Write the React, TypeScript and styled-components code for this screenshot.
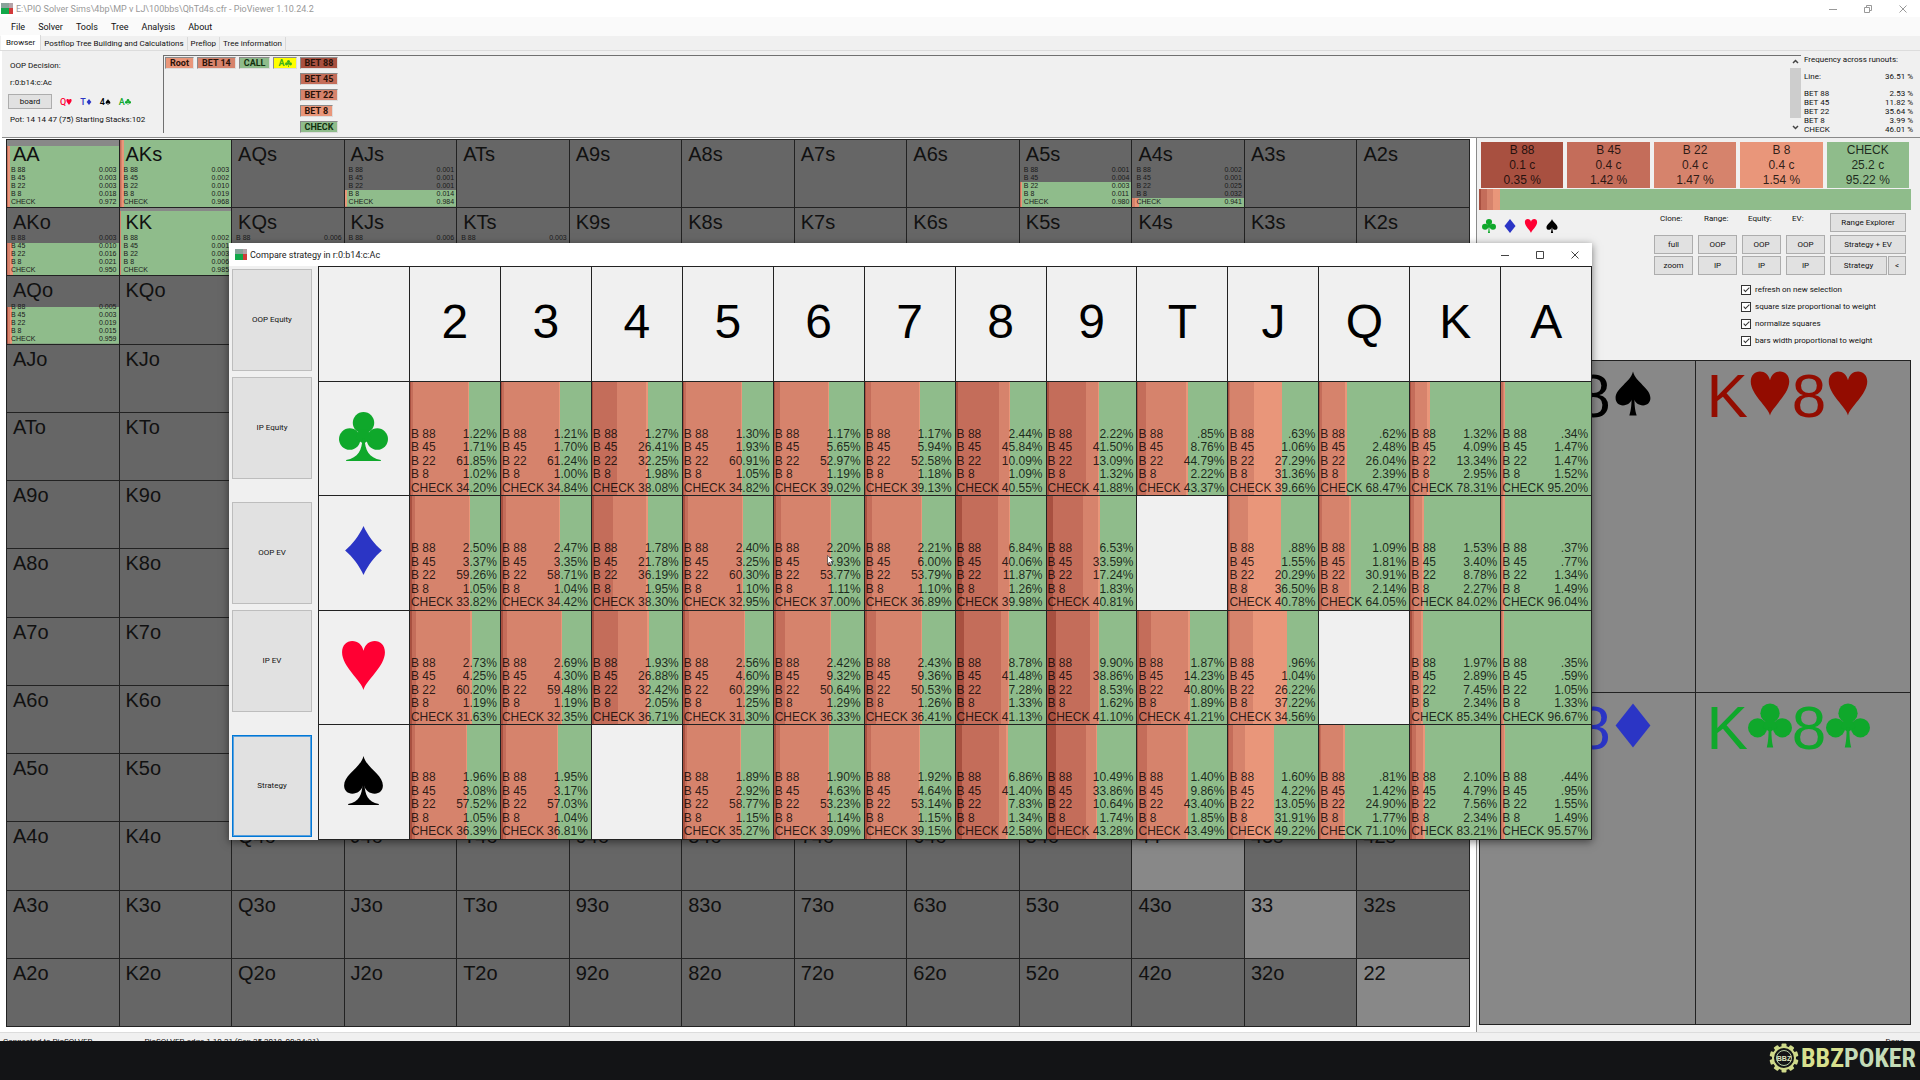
import React from "react";
import styled, { createGlobalStyle } from "styled-components";

const C = {
  b88: "#a85040",
  b45: "#c46d5a",
  b22: "#d6836c",
  b8: "#e9967a",
  check: "#8fbc8b",
  face: "#f0f0f0",
  cell: "#666666",
  pair: "#888888",
  line: "#222222",
};
const ACTIONS = ["B 88", "B 45", "B 22", "B 8", "CHECK"];
const ACTION_COLORS = [C.b88, C.b45, C.b22, C.b8, C.check];

const Global = createGlobalStyle`
  *, *::before, *::after { box-sizing: border-box; }
  body { margin: 0; background: #131416; color: #111; font: 8px/12px Roboto, "Liberation Sans", sans-serif; }
  button, input { font: inherit; color: inherit; margin: 0; }
  table { border-spacing: 0; }
  th { font-weight: 400; }
`;

/* ---------- window chrome ---------- */

const Shell = styled.div`
  position: relative;
  min-height: 100vh;
  display: flex;
  flex-direction: column;
  background: ${C.face};
`;
const TitleBar = styled.header<{ $h: number; $muted?: boolean }>`
  height: ${(p) => p.$h}px;
  flex: none;
  display: flex;
  align-items: center;
  padding-left: ${(p) => (p.$muted ? 1 : 6)}px;
  background: #fff;
  color: ${(p) => (p.$muted ? "#999" : "#222")};
  font: 9px/14px Roboto, "Open Sans", sans-serif;
`;
const TitleText = styled.span`
  flex: 1;
  padding-left: 3px;
`;
const ChromeButton = styled.button`
  width: 35px;
  height: 16px;
  padding: 0;
  border: 0;
  background: none;
  display: grid;
  place-items: center;
  color: ${(p) => p.color};
`;
const MenuBar = styled.nav`
  height: 19px;
  flex: none;
  display: flex;
  align-items: center;
  gap: 13px;
  padding-left: 11px;
  background: #fafafa;
  font: 9px/12px Roboto, "Open Sans", sans-serif;
`;
const MenuItem = styled.button`
  padding: 0;
  border: 0;
  background: none;
`;
const TabStrip = styled.div`
  height: 15px;
  flex: none;
  display: flex;
  align-items: flex-end;
  padding-left: 1px;
  border-bottom: 1px solid #dcdcdc;
`;
const Tab = styled.button<{ $active?: boolean }>`
  height: ${(p) => (p.$active ? 15 : 13)}px;
  padding: 1px ${(p) => (p.$active ? 5 : 3)}px 0;
  border: 0;
  border-right: 1px solid #d9d9d9;
  background: ${(p) => (p.$active ? "#fff" : C.face)};
  line-height: 12px;
`;

/* ---------- top section ---------- */

const Top = styled.section`
  height: 86px;
  flex: none;
  display: grid;
  grid-template-columns: 161px 1fr 119px;
  padding-top: 4px;
  border-left: 2px solid #fff;
`;
const Info = styled.div`
  padding: 5px 0 0 8px;
  display: flex;
  flex-direction: column;
  gap: 5px;
  white-space: nowrap;
`;
const Board = styled.div`
  display: flex;
  align-items: center;
  gap: 8px;
  margin-left: -2px;
`;
const PushButton = styled.button`
  height: 19px;
  padding: 0;
  border: 1px solid #adadad;
  background: #e1e1e1;
  line-height: 12px;
`;
const BoardButton = styled(PushButton)`
  width: 44px;
  height: 15px;
`;
const BoardCard = styled.span`
  display: flex;
  align-items: center;
  color: ${(p) => p.color};
  font-size: 9px;
  font-weight: 500;
`;
const TreePanel = styled.div`
  display: flex;
  align-items: flex-start;
  gap: 3px;
  height: 78px;
  padding: 1px 0 0 1px;
  border-top: 1px solid #707070;
  border-left: 1px solid #707070;
`;
const NodeColumn = styled.div`
  flex: 1;
  display: flex;
  flex-direction: column;
  align-items: flex-start;
  gap: 4px;
`;
const Node = styled.button<{ $bg: string }>`
  display: flex;
  align-items: center;
  height: 12px;
  padding: 0 4px;
  border: 1px solid;
  border-color: #8a8a8a #ddd #ddd #8a8a8a;
  background: ${(p) => p.$bg};
  color: ${(p) => p.color || "#2a1208"};
  font: 700 9px/10px Roboto, "Liberation Sans", sans-serif;
`;
const ScrollTrack = styled.div`
  width: 12px;
  height: 76px;
  display: flex;
  flex-direction: column;
  align-items: center;
  justify-content: space-between;
`;
const ScrollThumb = styled.div`
  width: 11px;
  height: 50px;
  background: #cdcdcd;
`;
const Freq = styled.dl`
  margin: 0;
  padding: 0 7px 0 3px;
  display: grid;
  grid-template-columns: 1fr auto;
  grid-template-rows: 9px 25px repeat(5, 9px);
  align-items: center;
  align-content: start;
  line-height: 9px;
`;
const FreqTitle = styled.dt`
  grid-column: 1 / 3;
`;
const FreqName = styled.dt``;
const FreqValue = styled.dd`
  margin: 0;
  text-align: right;
`;

/* ---------- main ---------- */

const Main = styled.main`
  flex: 1;
  display: grid;
  grid-template-columns: 1fr 444px;
  border-left: 2px solid #fff;
`;
const MatrixWrap = styled.div`
  display: flex;
  padding: 1px 6px 5px 4px;
  background: #fff;
  border-top: 1px solid #8a8a8a;
`;
const Matrix = styled.table`
  flex: 1;
  display: grid;
  border: 1px solid ${C.line};
  border-width: 1px 0 0 1px;
`;
const Contents = styled.tbody`
  display: grid;
  grid-template-columns: repeat(13, 1fr);
  grid-template-rows: repeat(13, minmax(60px, 1fr));
`;
const Row = styled.tr`
  display: contents;
`;
const Hand = styled.td<{ $pair: boolean }>`
  display: flex;
  flex-direction: column;
  justify-content: space-between;
  min-height: 0;
  padding: 4px 2px 3px 4px;
  border: 1px solid ${C.line};
  border-width: 0 1px 1px 0;
  background-color: ${(p) => (p.$pair ? C.pair : C.cell)};
  background-repeat: no-repeat;
  background-position: left bottom;
  font: 20px/20px "Liberation Sans", Arial, sans-serif;
`;
const HandName = styled.span`
  padding-left: 2px;
`;
const HandStats = styled.span`
  display: grid;
  grid-template-columns: 1fr auto;
  grid-template-rows: repeat(5, 1fr);
  height: 38px;
  font-size: 7px;
  line-height: 8px;
  color: #1a1a1a;
`;

const Side = styled.aside`
  display: flex;
  flex-direction: column;
  padding: 0 9px 7px 2px;
  border-left: 1px solid #8a8a8a;
  border-top: 1px solid #8a8a8a;
`;
const Summary = styled.ul`
  list-style: none;
  margin: 0;
  padding: 4px 2px 1px;
  display: grid;
  grid-template-columns: repeat(5, 1fr);
  gap: 4px;
`;
const SummaryBox = styled.li<{ $bg: string }>`
  display: flex;
  flex-direction: column;
  align-items: center;
  height: 46px;
  padding-top: 1px;
  background: ${(p) => p.$bg};
  font: 12px/15px "Liberation Sans", sans-serif;
  color: rgba(0, 0, 0, 0.8);
`;
const StrategyBar = styled.div`
  height: 21px;
`;
const Controls = styled.div`
  display: flex;
  justify-content: space-between;
  padding: 3px 5px 0 3px;
`;
const SuitPicker = styled.div`
  display: flex;
  gap: 7px;
  height: 14px;
  margin-top: 6px;
`;
const ControlGrid = styled.div`
  display: grid;
  grid-template-columns: repeat(4, 39px) 76px;
  grid-template-rows: 20px 19px 19px;
  column-gap: 5px;
  row-gap: 2px;
`;
const GroupLabel = styled.span`
  padding-left: 6px;
  line-height: 11px;
`;
const SplitRow = styled.div`
  display: grid;
  grid-template-columns: 1fr 18px;
  gap: 1px;
`;
const Options = styled.div`
  display: grid;
  gap: 5px;
  padding: 9px 0 0 262px;
`;
const Option = styled.label`
  display: flex;
  align-items: center;
  gap: 4px;
`;
const Check = styled.input`
  appearance: none;
  width: 10px;
  height: 10px;
  border: 1px solid #333;
  background: #fff;
  display: grid;
  place-items: center;
  &:checked::after {
    content: "";
    width: 3px;
    height: 6px;
    margin-top: -2px;
    border: solid #333;
    border-width: 0 1px 1px 0;
    transform: rotate(45deg);
  }
`;
const Combos = styled.div`
  flex: 1;
  margin-top: 13px;
  display: grid;
  grid-template-columns: 1fr 1fr;
  grid-template-rows: 1fr 1fr;
  border: 1px solid ${C.line};
  border-width: 1px 0 0 1px;
`;
const Combo = styled.div`
  display: flex;
  align-items: flex-start;
  padding: 2px 0 0 11px;
  border: 1px solid ${C.line};
  border-width: 0 1px 1px 0;
  background: ${C.pair};
  color: ${(p) => p.color};
  font: 62px/66px "Liberation Sans", Arial, sans-serif;
`;
const ComboSuit = styled.span`
  width: 44px;
  padding: 8px 0 0;
  display: flex;
  justify-content: center;
`;

const StatusBar = styled.div`
  height: 9px;
  flex: none;
  display: flex;
  justify-content: space-between;
  overflow: hidden;
  padding: 3px 16px 0 3px;
  border-top: 1px solid #dcdcdc;
`;
const StatusText = styled.span`
  margin-right: 52px;
`;
const Footer = styled.footer`
  height: 39px;
  flex: none;
  display: flex;
  justify-content: flex-end;
  align-items: center;
  gap: 2px;
  padding: 0 4px 5px 0;
  background: #131416;
`;
const Brand = styled.span`
  color: ${(p) => p.color};
  font: 700 26px/30px "Liberation Sans Narrow", "Roboto Condensed", "DejaVu Sans Condensed", sans-serif;
`;

/* ---------- compare dialog ---------- */

const Dialog = styled.section`
  position: absolute;
  left: 229px;
  top: 243px;
  width: 71%;
  background: ${C.face};
  box-shadow: 0 2px 8px rgba(0, 0, 0, 0.5);
`;
const DialogBody = styled.div`
  display: grid;
  grid-template-columns: 89px 1fr;
`;
const Modes = styled.div`
  display: flex;
  flex-direction: column;
  justify-content: space-between;
  padding: 3px 6px 3px 3px;
`;
const ModePair = styled.div`
  display: grid;
  gap: 6px;
`;
const ModeButton = styled(PushButton)<{ $active?: boolean }>`
  height: 102px;
  border: ${(p) => (p.$active ? "1px solid #0078d7" : "1px solid #bdbdbd")};
  box-shadow: ${(p) => (p.$active ? "inset 0 0 0 1px #5aa0dc" : "none")};
`;
const Compare = styled.table`
  display: grid;
  border: 1px solid ${C.line};
  border-width: 1px 0 0 1px;
`;
const CompareBody = styled.tbody`
  display: grid;
  grid-template-columns: repeat(14, 1fr);
  grid-template-rows: repeat(5, 1fr);
  height: 573px;
`;
const Head = styled.th`
  display: grid;
  place-items: center;
  padding-bottom: 5px;
  border: 1px solid ${C.line};
  border-width: 0 1px 1px 0;
  background: ${C.face};
  color: #000;
  font: 48px/54px "Liberation Sans", Arial, sans-serif;
`;
const Strategy = styled.td`
  position: relative;
  display: grid;
  grid-template-columns: 1fr auto;
  grid-auto-rows: 1fr;
  padding: 46px 3px 0 1px;
  border: 1px solid ${C.line};
  border-width: 0 1px 1px 0;
  font: 12px/13px "Liberation Sans", Arial, sans-serif;
  color: rgba(0, 0, 0, 0.8);
`;
const Value = styled.span`
  text-align: right;
`;
const Pointer = styled.svg`
  position: absolute;
  left: 53px;
  top: 59px;
`;

/* ---------- drawings ---------- */

type SuitName = "c" | "d" | "h" | "s";
const SUIT_COLOR: Record<SuitName, string> = { c: "#0fa82b", d: "#2b35c5", h: "#ff0033", s: "#000000" };
const HEART = "M24 48C22 39 3 25 3 11C3 4 7.500 0 13 0C18.500 0 22.500 3.500 24 9.500C25.500 3.500 29.500 0 35 0C40.500 0 45 4 45 11C45 25 26 39 24 48Z";
const DIAMOND = "M24 0C28 9 35 18 42 24C35 30 28 39 24 48C20 39 13 30 6 24C13 18 20 9 24 0Z";
const DIAMOND_PLAIN = "M24 0L43 24L24 48L5 24Z";

function Suit({ suit, size, color, flared }: { suit: SuitName; size: number; color?: string; flared?: boolean }) {
  return (
    <svg width={size} height={size} viewBox="0 0 48 48" fill={color || SUIT_COLOR[suit]} aria-hidden="true">
      {suit === "h" && <path d={HEART} />}
      {suit === "d" && <path d={flared ? DIAMOND : DIAMOND_PLAIN} />}
      {suit === "c" && (
        <>
          <circle cx="24" cy="10.500" r="10.500" />
          <circle cx="10.500" cy="26.500" r="10.500" />
          <circle cx="37.500" cy="26.500" r="10.500" />
          <path d="M20 17H28L32 26L24 31L16 26Z" />
          <path
            d={
              flared
                ? "M23 26H25C25.500 37 29 45 41 47V48.500H7V47C19 45 22.500 37 23 26Z"
                : "M22.500 26H25.500C25.500 36 26 42 27.500 48H20.500C22 42 22.500 36 22.500 26Z"
            }
          />
        </>
      )}
      {suit === "s" && (
        <>
          <path d="M24 0C27 12 43 18 43 29C43 34 39.500 37 35 37C30 37 26 34 24.500 29H23.500C22 34 18 37 13 37C8.500 37 5 34 5 29C5 18 21 12 24 0Z" />
          <path
            d={
              flared
                ? "M23 28H25C25.500 38 28 45 39 47V48H9V47C20 45 22.500 38 23 28Z"
                : "M22.500 26H25.500C25.500 36 26 42 28 48H20C22 42 22.500 36 22.500 26Z"
            }
          />
        </>
      )}
    </svg>
  );
}

function AppIcon() {
  return (
    <svg width="12" height="11" viewBox="0 0 12 11" aria-hidden="true">
      <rect width="8" height="5" fill="#8aa39b" />
      <rect x="8" width="4" height="5" fill="#b3a3a8" />
      <rect y="5" width="8" height="6" fill="#12a84a" />
      <rect x="8" y="5" width="4" height="6" fill="#d23a3a" />
    </svg>
  );
}

function WindowButtons({ color, restore }: { color: string; restore?: boolean }) {
  const common = { width: 8, height: 8, viewBox: "0 0 8 8", fill: "none", stroke: "currentColor" };
  return (
    <>
      <ChromeButton color={color} aria-label="Minimize">
        <svg {...common}><path d="M0 4.500H8" /></svg>
      </ChromeButton>
      <ChromeButton color={color} aria-label={restore ? "Restore" : "Maximize"}>
        <svg {...common}>
          {restore ? <path d="M.5 2.500H5.500V7.500H.5ZM2.500 2V.5H7.500V5.500H6" /> : <path d="M.5 .5H7.500V7.500H.5Z" />}
        </svg>
      </ChromeButton>
      <ChromeButton color={color} aria-label="Close">
        <svg {...common}><path d="M.5 .5L7.500 7.500M7.500 .5L.5 7.500" /></svg>
      </ChromeButton>
    </>
  );
}

function Gear() {
  const teeth = Array.from({ length: 10 }, (_, i) => i * 36);
  return (
    <svg width="30" height="30" viewBox="0 0 30 30" aria-hidden="true">
      {teeth.map((a) => (
        <rect key={a} x="12.500" y="0.500" width="5" height="6" rx="1" fill="#cfd98a" transform={`rotate(${a} 15 15)`} />
      ))}
      <circle cx="15" cy="15" r="11" fill="#131416" stroke="#cfd98a" strokeWidth="2" />
      <circle cx="15" cy="15" r="7.500" fill="none" stroke="#b9cfa5" strokeWidth="1" />
      <text x="15" y="18" textAnchor="middle" fontSize="7" fontWeight="700" fontFamily="Liberation Sans Narrow, Liberation Sans, sans-serif" fill="#dfe8c0">
        BBZ
      </text>
    </svg>
  );
}

/* ---------- data ---------- */

function stops(values: number[]) {
  const total = values.reduce((a, b) => a + b, 0);
  let at = 0;
  const parts = values.map((v, i) => {
    const from = at;
    at += (v / total) * 100;
    return `${ACTION_COLORS[i]} ${from}% ${at}%`;
  });
  return `linear-gradient(to right, ${parts.join(", ")})`;
}

const RANKS = "AKQJT98765432".split("");
const HANDS: Record<string, { fill: number; v: number[] }> = {
  AA: { fill: 92, v: [0.003, 0.003, 0.003, 0.018, 0.972] },
  AKs: { fill: 100, v: [0.003, 0.002, 0.01, 0.019, 0.968] },
  AJs: { fill: 25, v: [0.001, 0.001, 0.001, 0.014, 0.984] },
  A5s: { fill: 38, v: [0.001, 0.004, 0.003, 0.011, 0.98] },
  A4s: { fill: 14, v: [0.002, 0.001, 0.025, 0.032, 0.941] },
  AKo: { fill: 49, v: [0.003, 0.01, 0.016, 0.021, 0.95] },
  KK: { fill: 96, v: [0.002, 0.001, 0.003, 0.006, 0.985] },
  KQs: { fill: 30, v: [0.006, 0.004, 0.012, 0.018, 0.96] },
  KJs: { fill: 30, v: [0.006, 0.004, 0.012, 0.018, 0.96] },
  KTs: { fill: 30, v: [0.003, 0.004, 0.012, 0.018, 0.963] },
  AQo: { fill: 54, v: [0.005, 0.003, 0.019, 0.015, 0.959] },
};
function handName(r: number, c: number) {
  if (r === c) return RANKS[r] + RANKS[c];
  return r < c ? `${RANKS[r]}${RANKS[c]}s` : `${RANKS[c]}${RANKS[r]}o`;
}

const COLS = "23456789TJQKA".split("");
const GRID: [SuitName, (string | null)[]][] = [
  ["c", ["1.22 1.71 61.85 1.02 34.20", "1.21 1.70 61.24 1.00 34.84", "1.27 26.41 32.25 1.98 38.08", "1.30 1.93 60.91 1.05 34.82", "1.17 5.65 52.97 1.19 39.02", "1.17 5.94 52.58 1.18 39.13", "2.44 45.84 10.09 1.09 40.55", "2.22 41.50 13.09 1.32 41.88", ".85 8.76 44.79 2.22 43.37", ".63 1.06 27.29 31.36 39.66", ".62 2.48 26.04 2.39 68.47", "1.32 4.09 13.34 2.95 78.31", ".34 1.47 1.47 1.52 95.20"]],
  ["d", ["2.50 3.37 59.26 1.05 33.82", "2.47 3.35 58.71 1.04 34.42", "1.78 21.78 36.19 1.95 38.30", "2.40 3.25 60.30 1.10 32.95", "2.20 5.93 53.77 1.11 37.00", "2.21 6.00 53.79 1.10 36.89", "6.84 40.06 11.87 1.26 39.98", "6.53 33.59 17.24 1.83 40.81", null, ".88 1.55 20.29 36.50 40.78", "1.09 1.81 30.91 2.14 64.05", "1.53 3.40 8.78 2.27 84.02", ".37 .77 1.34 1.49 96.04"]],
  ["h", ["2.73 4.25 60.20 1.19 31.63", "2.69 4.30 59.48 1.19 32.35", "1.93 26.88 32.42 2.05 36.71", "2.56 4.60 60.29 1.25 31.30", "2.42 9.32 50.64 1.29 36.33", "2.43 9.36 50.53 1.26 36.41", "8.78 41.48 7.28 1.33 41.13", "9.90 38.86 8.53 1.62 41.10", "1.87 14.23 40.80 1.89 41.21", ".96 1.04 26.22 37.22 34.56", null, "1.97 2.89 7.45 2.34 85.34", ".35 .59 1.05 1.33 96.67"]],
  ["s", ["1.96 3.08 57.52 1.05 36.39", "1.95 3.17 57.03 1.04 36.81", null, "1.89 2.92 58.77 1.15 35.27", "1.90 4.63 53.23 1.14 39.09", "1.92 4.64 53.14 1.15 39.15", "6.86 41.40 7.83 1.34 42.58", "10.49 33.86 10.64 1.74 43.28", "1.40 9.86 43.40 1.85 43.49", "1.60 4.22 13.05 31.91 49.22", ".81 1.42 24.90 1.77 71.10", "2.10 4.79 7.56 2.34 83.21", ".44 .95 1.55 1.49 95.57"]],
];

const SUMMARY = [["0.1 c", "0.35 %"], ["0.4 c", "1.42 %"], ["0.4 c", "1.47 %"], ["0.4 c", "1.54 %"], ["25.2 c", "95.22 %"]];
const FREQS = [["BET 88", "2.53 %"], ["BET 45", "11.82 %"], ["BET 22", "35.64 %"], ["BET 8", "3.99 %"], ["CHECK", "46.01 %"]];
const OPTIONS = ["refresh on new selection", "square size proportional to weight", "normalize squares", "bars width proportional to weight"];
const BOARD: [string, SuitName][] = [["Q", "h"], ["T", "d"], ["4", "s"], ["A", "c"]];
const COMBOS: [SuitName, string][] = [["s", "#000"], ["h", "#930c00"], ["d", "#2b35c5"], ["c", "#0fa82b"]];

/* ---------- app ---------- */

function HandMatrix() {
  return (
    <Matrix>
      <Contents>
        {RANKS.map((_, r) => (
          <Row key={r}>
            {RANKS.map((__, c) => {
              const name = handName(r, c);
              const h = HANDS[name];
              return (
                <Hand
                  key={name}
                  $pair={r === c}
                  style={h && { backgroundImage: stops(h.v), backgroundSize: `100% ${h.fill}%` }}
                >
                  <HandName>{name}</HandName>
                  {h && (
                    <HandStats>
                      {h.v.map((v, i) => (
                        <React.Fragment key={i}>
                          <span>{ACTIONS[i]}</span>
                          <span>{v.toFixed(3)}</span>
                        </React.Fragment>
                      ))}
                    </HandStats>
                  )}
                </Hand>
              );
            })}
          </Row>
        ))}
      </Contents>
    </Matrix>
  );
}

function CompareDialog() {
  return (
    <Dialog role="dialog" aria-label="Compare strategy">
      <TitleBar $h={23}>
        <AppIcon />
        <TitleText>Compare strategy in r:0:b14:c:Ac</TitleText>
        <WindowButtons color="#444" />
      </TitleBar>
      <DialogBody>
        <Modes>
          <ModePair>
            <ModeButton>OOP Equity</ModeButton>
            <ModeButton>IP Equity</ModeButton>
          </ModePair>
          <ModePair>
            <ModeButton>OOP EV</ModeButton>
            <ModeButton>IP EV</ModeButton>
          </ModePair>
          <ModeButton $active>Strategy</ModeButton>
        </Modes>
        <Compare>
          <CompareBody>
            <Row>
              <Head aria-label="Suit" />
              {COLS.map((c) => (
                <Head key={c} scope="col">{c}</Head>
              ))}
            </Row>
            {GRID.map(([suit, cells]) => (
              <Row key={suit}>
                <Head scope="row"><Suit suit={suit} size={49} flared /></Head>
                {cells.map((cell, i) => {
                  const values = cell ? cell.split(" ") : [];
                  return (
                    <Strategy key={i} style={cell ? { backgroundImage: stops(values.map(Number)) } : undefined}>
                      {values.map((v, j) => (
                        <React.Fragment key={j}>
                          <span>{ACTIONS[j]}</span>
                          <Value>{v}%</Value>
                        </React.Fragment>
                      ))}
                      {suit === "d" && COLS[i] === "6" && (
                        <Pointer width="8" height="11" viewBox="0 0 8 11" fill="#fff" stroke="#333" strokeWidth=".6">
                          <path d="M.5 .5V9L2.500 7L4 10.300L5.300 9.600L4 6.500H6.800Z" />
                        </Pointer>
                      )}
                    </Strategy>
                  );
                })}
              </Row>
            ))}
          </CompareBody>
        </Compare>
      </DialogBody>
    </Dialog>
  );
}

function SidePanel() {
  return (
    <Side>
      <Summary>
        {SUMMARY.map(([combos, pct], i) => (
          <SummaryBox key={i} $bg={ACTION_COLORS[i]}>
            <span>{ACTIONS[i]}</span>
            <span>{combos}</span>
            <span>{pct}</span>
          </SummaryBox>
        ))}
      </Summary>
      <StrategyBar style={{ backgroundImage: stops([0.35, 1.42, 1.47, 1.54, 95.22]) }} />
      <Controls>
        <SuitPicker>
          {(["c", "d", "h", "s"] as SuitName[]).map((s) => (
            <Suit key={s} suit={s} size={14} />
          ))}
        </SuitPicker>
        <ControlGrid>
          <GroupLabel>Clone:</GroupLabel>
          <GroupLabel>Range:</GroupLabel>
          <GroupLabel>Equity:</GroupLabel>
          <GroupLabel>EV:</GroupLabel>
          <PushButton>Range Explorer</PushButton>
          <PushButton>full</PushButton>
          <PushButton>OOP</PushButton>
          <PushButton>OOP</PushButton>
          <PushButton>OOP</PushButton>
          <PushButton>Strategy + EV</PushButton>
          <PushButton>zoom</PushButton>
          <PushButton>IP</PushButton>
          <PushButton>IP</PushButton>
          <PushButton>IP</PushButton>
          <SplitRow>
            <PushButton>Strategy</PushButton>
            <PushButton>&lt;</PushButton>
          </SplitRow>
        </ControlGrid>
      </Controls>
      <Options>
        {OPTIONS.map((o) => (
          <Option key={o}>
            <Check type="checkbox" defaultChecked />
            {o}
          </Option>
        ))}
      </Options>
      <Combos>
        {COMBOS.map(([s, color]) => (
          <Combo key={s} color={color}>
            K<ComboSuit><Suit suit={s} size={45} color={color} /></ComboSuit>
            8<ComboSuit><Suit suit={s} size={45} color={color} /></ComboSuit>
          </Combo>
        ))}
      </Combos>
    </Side>
  );
}

export default function App() {
  return (
    <Shell>
      <Global />
      <TitleBar $h={17} $muted>
        <AppIcon />
        <TitleText>E:\PIO Solver Sims\4bp\MP v LJ\100bbs\QhTd4s.cfr - PioViewer 1.10.24.2</TitleText>
        <WindowButtons color="#999" restore />
      </TitleBar>
      <MenuBar>
        {["File", "Solver", "Tools", "Tree", "Analysis", "About"].map((m) => (
          <MenuItem key={m}>{m}</MenuItem>
        ))}
      </MenuBar>
      <TabStrip>
        <Tab $active>Browser</Tab>
        <Tab>Postflop Tree Building and Calculations</Tab>
        <Tab>Preflop</Tab>
        <Tab>Tree information</Tab>
      </TabStrip>
      <Top>
        <Info>
          <span>OOP Decision:</span>
          <span>r:0:b14:c:Ac</span>
          <Board>
            <BoardButton>board</BoardButton>
            {BOARD.map(([r, s]) => (
              <BoardCard key={s} color={SUIT_COLOR[s]}>
                {r}<Suit suit={s} size={6} />
              </BoardCard>
            ))}
          </Board>
          <span>Pot: 14 14 47 (75) Starting Stacks:102</span>
        </Info>
        <TreePanel>
          <Node $bg={C.b8}>Root</Node>
          <Node $bg={C.b22}>BET 14</Node>
          <Node $bg={C.check} color="#12300f">CALL</Node>
          <Node $bg="#ffff00" color="#3fae1c">A<Suit suit="c" size={7} color="#3fae1c" /></Node>
          <NodeColumn>
            <Node $bg={C.b88}>BET 88</Node>
            <Node $bg={C.b45}>BET 45</Node>
            <Node $bg={C.b22}>BET 22</Node>
            <Node $bg={C.b8}>BET 8</Node>
            <Node $bg={C.check} color="#12300f">CHECK</Node>
          </NodeColumn>
          <ScrollTrack>
            <svg width="7" height="10" viewBox="0 0 7 10" fill="none" stroke="#444" strokeWidth="1.500"><path d="M1 6L3.500 3.500L6 6" /></svg>
            <ScrollThumb />
            <svg width="7" height="14" viewBox="0 0 7 14" fill="none" stroke="#444" strokeWidth="1.500"><path d="M1 7L3.500 9.500L6 7" /></svg>
          </ScrollTrack>
        </TreePanel>
        <Freq>
          <FreqTitle>Frequency across runouts:</FreqTitle>
          <FreqName>Line:</FreqName>
          <FreqValue>36.51 %</FreqValue>
          {FREQS.map(([n, v]) => (
            <React.Fragment key={n}>
              <FreqName>{n}</FreqName>
              <FreqValue>{v}</FreqValue>
            </React.Fragment>
          ))}
        </Freq>
      </Top>
      <Main>
        <MatrixWrap>
          <HandMatrix />
        </MatrixWrap>
        <SidePanel />
      </Main>
      <StatusBar>
        <span>
          <StatusText>Connected to PioSOLVER</StatusText>
          <span>PioSOLVER-edge 1.10.21 (Sep 25 2018, 00:24:31)</span>
        </span>
        <span>Done</span>
      </StatusBar>
      <Footer>
        <Gear />
        <span>
          <Brand color="#d7e08e">BBZ</Brand>
          <Brand color="#c4dcb8">POKER</Brand>
        </span>
      </Footer>
      <CompareDialog />
    </Shell>
  );
}
